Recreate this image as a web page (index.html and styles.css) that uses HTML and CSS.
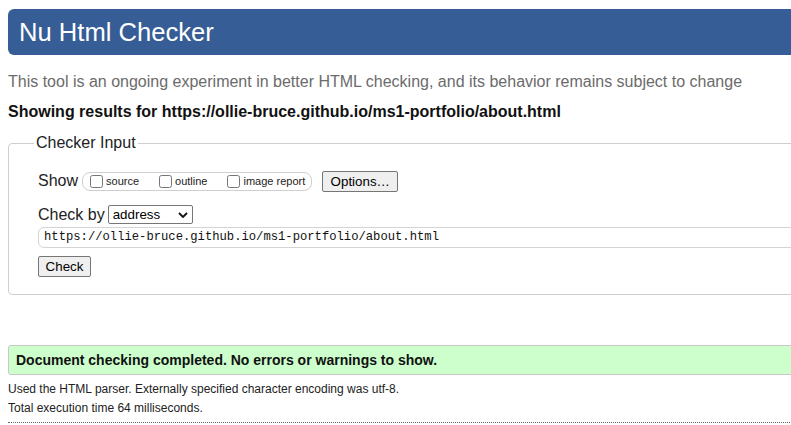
FILE: index.html
```html
<!DOCTYPE html>
<html lang="en">
<head>
<meta charset="utf-8">
<title>Nu Html Checker</title>
<link rel="stylesheet" href="styles.css">
</head>
<body>
<div class="page">
  <h1 class="masthead">Nu Html Checker</h1>
  <p class="intro">This tool is an ongoing experiment in better HTML checking, and its behavior remains subject to change</p>
  <p class="results-for">Showing results for https://ollie-bruce.github.io/ms1-portfolio/about.html</p>
  <form class="checker">
    <fieldset class="checker-fieldset">
      <legend class="checker-legend">Checker Input</legend>
      <div class="row show-row">
        <span class="row-label">Show</span>
        <span class="show-group">
          <label class="opt"><input type="checkbox" class="cb">source</label>
          <label class="opt"><input type="checkbox" class="cb">outline</label>
          <label class="opt"><input type="checkbox" class="cb">image report</label>
        </span>
        <button type="button" class="btn options-btn">Options…</button>
      </div>
      <div class="row checkby-row">
        <span class="row-label">Check by</span>
        <span class="select">address<svg class="chev" viewBox="0 0 10 6" width="10" height="6"><path d="M1 1 L5 5 L9 1" fill="none" stroke="#111" stroke-width="1.8"/></svg></span>
      </div>
      <div class="url-input">https://ollie-bruce.github.io/ms1-portfolio/about.html</div>
      <div class="row check-row">
        <button type="button" class="btn check-btn">Check</button>
      </div>
    </fieldset>
  </form>
  <p class="success">Document checking completed. No errors or warnings to show.</p>
  <p class="details">Used the HTML parser. Externally specified character encoding was utf-8.</p>
  <p class="details">Total execution time 64 milliseconds.</p>
  <hr class="dotted">
</div>
</body>
</html>
```
FILE: styles.css
```css
html, body {
  margin: 0;
  padding: 0;
  background: #fff;
  overflow: hidden;
}
body {
  font-family: "Liberation Sans", Arial, sans-serif;
  color: #222;
}
.page {
  width: 900px;
  padding: 9px 0 0 8px;
}
.masthead {
  margin: 0;
  height: 46px;
  line-height: 46px;
  padding-left: 11px;
  font-size: 25.6px;
  font-weight: normal;
  color: #fff;
  background: #365d95;
  border-radius: 6px 0 0 6px;
}
.intro {
  margin: 17px 0 0;
  line-height: 20px;
  font-size: 16px;
  color: #6b6b6b;
}
.results-for {
  margin: 10px 0 0;
  line-height: 20px;
  font-size: 16px;
  font-weight: bold;
  color: #111;
}
.checker {
  margin: 11px 0 0;
}
.checker-fieldset {
  margin: 0;
  padding: 0 0 17px 29px;
  border: 1px solid #cfcfcf;
  border-radius: 4px;
  min-width: 0;
}
.checker-legend {
  margin-left: -4px;
  padding: 0 2px;
  font-size: 16px;
  line-height: 20px;
  color: #222;
}
.row {
  display: flex;
  align-items: center;
}
.row-label {
  font-size: 16px;
  line-height: 20px;
}
.show-row {
  margin-top: 17px;
  height: 22px;
}
.show-group {
  display: flex;
  align-items: center;
  gap: 20px;
  height: 19px;
  box-sizing: border-box;
  margin-left: 4px;
  padding: 0 6px 0 7px;
  border: 1px solid #cfcfcf;
  border-radius: 8px;
  font-size: 11px;
}
.opt {
  display: flex;
  align-items: center;
  gap: 3px;
}
.opt .cb {
  margin: 0;
  width: 13px;
  height: 13px;
}
.btn {
  font-family: "Liberation Sans", Arial, sans-serif;
  font-size: 13.33px;
  color: #000;
  background: #efefef;
  border: 1px solid #767676;
  border-radius: 2px;
  padding: 0 6px;
  height: 21px;
}
.options-btn {
  margin-left: 10px;
  width: 76px;
}
.checkby-row {
  margin-top: 13px;
  height: 19px;
}
.select {
  display: flex;
  align-items: center;
  justify-content: space-between;
  margin-left: 3px;
  width: 85px;
  height: 19px;
  box-sizing: border-box;
  padding: 0 4px;
  border: 1px solid #767676;
  border-radius: 2px;
  font-size: 13.33px;
  color: #000;
}
.chev {
  display: block;
}
.url-input {
  margin-top: 3px;
  height: 21px;
  box-sizing: border-box;
  padding: 0 5px;
  line-height: 19px;
  border: 1px solid #d4d4d4;
  border-radius: 6px;
  font-family: "Liberation Mono", "DejaVu Sans Mono", monospace;
  font-size: 12.2px;
  color: #111;
}
.check-row {
  margin-top: 8px;
}
.check-btn {
  width: 53px;
  height: 21px;
}
.success {
  margin: 50px 0 0;
  height: 30px;
  box-sizing: border-box;
  line-height: 28px;
  padding-left: 7px;
  background: #ccffcc;
  border: 1px solid #c8c8c8;
  border-radius: 3px;
  font-size: 14px;
  font-weight: bold;
  color: #111;
}
.details {
  margin: 0;
  font-size: 12px;
  line-height: 19px;
  color: #222;
}
.success + .details {
  margin-top: 5px;
}
.dotted {
  margin: 4px 0 0;
  border: 0;
  border-top: 1px dotted #666;
  height: 0;
}
```
